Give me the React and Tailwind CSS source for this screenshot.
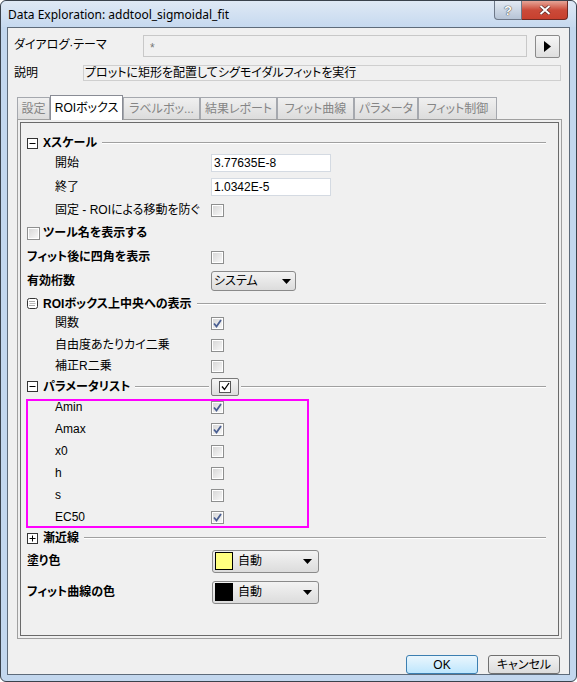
import React from 'react';

const FONT = "[font-family:'Liberation_Sans','Noto_Sans_CJK_JP',sans-serif]";

const CheckMark = ({ color = '#4a5f92', w = 1.8 }) => (
    <svg width="9" height="9" viewBox="0 0 9 9">
        <path d="M1 4.5 L3.5 7.5 L8 1" fill="none" stroke={color} strokeWidth={w} />
    </svg>
);

const Check = ({ checked }) => (
    <span className="inline-flex w-[13px] h-[13px] border border-[#8e8f8f] bg-white p-px shrink-0">
        <span className="flex flex-1 items-center justify-center bg-linear-to-br from-[#d8d8d8] to-[#f7f7f7]">
            {checked && <CheckMark />}
        </span>
    </span>
);

const MinusBox = () => (
    <svg width="11" height="11" viewBox="0 0 11 11" className="shrink-0">
        <rect x="0.5" y="0.5" width="10" height="10" fill="#fff" stroke="#333" />
        <path d="M2.5 5.5 H8.5" stroke="#000" />
    </svg>
);

const PlusBox = () => (
    <svg width="11" height="11" viewBox="0 0 11 11" className="shrink-0">
        <rect x="0.5" y="0.5" width="10" height="10" fill="#fff" stroke="#333" />
        <path d="M2.5 5.5 H8.5 M5.5 2.5 V8.5" stroke="#000" />
    </svg>
);

const GroupBox = () => (
    <svg width="11" height="11" viewBox="0 0 11 11" className="shrink-0">
        <rect x="0.5" y="0.5" width="10" height="10" rx="2" fill="#fff" stroke="#333" />
        <path d="M2.5 3.5 H8.5 M2.5 7.5 H8.5" stroke="#555" strokeDasharray="1 1" />
        <path d="M2.5 5.5 H8.5" stroke="#bbb" />
    </svg>
);

const Arrow = () => (
    <svg width="9" height="5" viewBox="0 0 9 5">
        <path d="M0 0 H9 L4.5 5 Z" fill="#000" />
    </svg>
);

const Header = ({ icon, label, mt, h = 'h-[20px]' }) => (
    <div className={`flex items-center pl-[6px] pr-[12px] ${h} ${mt}`}>
        {icon}
        <span className="ml-[5px] font-bold">{label}</span>
        <div className="flex-1 ml-[5px] border-t border-[#a0a0a0] border-b border-b-white" />
    </div>
);

const SubRow = ({ label, mt, h = 'h-[20px]', children }) => (
    <div className={`flex items-center ${h} ${mt}`}>
        <span className="w-[190px] pl-[34px] shrink-0">{label}</span>
        {children}
    </div>
);

const BoldRow = ({ label, mt, h = 'h-[20px]', children }) => (
    <div className={`flex items-center ${h} ${mt}`}>
        <span className="w-[190px] pl-[6px] shrink-0 font-bold">{label}</span>
        {children}
    </div>
);

const TextBox = ({ value }) => (
    <div className="w-[120px] h-[18px] bg-white border border-[#d4dae2] flex items-center pl-[2px]">{value}</div>
);

const ColorDrop = ({ swatch }) => (
    <div className="ml-px w-[107px] h-[23px] rounded-[3px] border border-[#8a8a8a] bg-linear-to-b from-[#f3f3f3] to-[#dcdcdc] flex items-center pl-[2px] pr-[6px]">
        <span className={`w-[18px] h-[18px] border border-black ${swatch}`} />
        <span className="ml-[5px] flex-1">自動</span>
        <Arrow />
    </div>
);

const tabs = [
    { label: '設定', w: 'w-[33px]' },
    { label: 'ROIボックス', w: 'w-[73px]', active: true },
    { label: 'ラベルボッ...', w: 'w-[77px]' },
    { label: '結果レポート', w: 'w-[77px]' },
    { label: 'フィット曲線', w: 'w-[77px]' },
    { label: 'パラメータ', w: 'w-[64px]' },
    { label: 'フィット制御', w: 'w-[79px]' },
];

const params = [
    { name: 'Amin', on: true },
    { name: 'Amax', on: true },
    { name: 'x0', on: false },
    { name: 'h', on: false },
    { name: 's', on: false },
    { name: 'EC50', on: true },
];

export default function App() {
    return (
        <div className={`w-[577px] h-[682px] bg-[#c3d7ee] border border-[#3a424c] rounded-[6px] flex flex-col text-[12px] text-black [font-feature-settings:'palt'] ${FONT}`}>
            {/* title bar */}
            <div className="h-[28px] flex rounded-t-[6px] bg-linear-to-b from-[#dfe9f5] to-[#c6d9ef]">
                <span className="pl-[7px] pt-[5px] text-[12px] [font-family:'Noto_Sans',sans-serif]">Data Exploration: addtool_sigmoidal_fit</span>
                <div className="ml-auto mr-[8px] flex h-[19px]">
                    <div className="w-[28px] border border-[#6d7888] border-t-0 rounded-bl-[4px] bg-linear-to-b from-[#e3eaf3] to-[#b6c4d6] flex items-center justify-center">
                        <span className="text-white font-bold text-[13px] [text-shadow:0_0_1px_#333,0_0_1px_#333] leading-none">?</span>
                    </div>
                    <div className="w-[46px] border border-[#6e2a24] border-t-0 border-l-0 rounded-br-[4px] bg-linear-to-b from-[#e5a497] via-[#cb4a39] to-[#c7402e] flex items-center justify-center">
                        <svg width="12" height="10" viewBox="0 0 12 10">
                            <path d="M1.5 1 L10.5 9 M10.5 1 L1.5 9" stroke="#4a2220" strokeWidth="3.2" />
                            <path d="M1.5 1 L10.5 9 M10.5 1 L1.5 9" stroke="#fff" strokeWidth="2" />
                        </svg>
                    </div>
                </div>
            </div>

            {/* client */}
            <div className="mx-[6px] mb-[6px] flex-1 border border-[#5e6b7a] bg-[#f0f0f0] flex flex-col">
                <div className="flex mt-[7px]">
                    <span className="w-[135px] pl-[6px] pt-[1px]">ダイアログ·テーマ</span>
                    <div className="w-[384px] h-[22px] border border-[#c8c8c8] bg-[#f0f0f0] pl-[6px] pt-[3px] text-[#777]">*</div>
                    <div className="ml-[8px] w-[25px] h-[23px] border border-[#8a8a8a] rounded-[2px] bg-linear-to-b from-[#f6f6f6] to-[#dedede] flex items-center justify-center">
                        <svg width="7" height="11" viewBox="0 0 7 11"><path d="M0 0 L7 5.5 L0 11 Z" fill="#000" /></svg>
                    </div>
                </div>

                <div className="flex items-center mt-[6px]">
                    <span className="w-[75px] pl-[6px]">説明</span>
                    <div className="w-[478px] h-[16px] border border-[#cfcfcf] flex items-center pl-px">プロットに矩形を配置してシグモイダルフィットを実行</div>
                </div>

                {/* tabs */}
                <div className="flex items-end ml-[9px] mt-[12px] h-[25px]">
                    {tabs.map((t) =>
                        t.active ? (
                            <div key={t.label} className={`${t.w} h-[25px] -mb-px z-10 bg-white border border-[#898c95] border-b-0 flex items-center justify-center`}>
                                {t.label}
                            </div>
                        ) : (
                            <div key={t.label} className={`${t.w} h-[22px] bg-linear-to-b from-[#f0f0f0] to-[#dcdcdc] border border-[#a5a8ae] border-b-0 flex items-center justify-center text-[#858585]`}>
                                {t.label}
                            </div>
                        )
                    )}
                </div>

                {/* tab panel */}
                <div className="ml-[9px] w-[545px] h-[520px] border border-[#a0a0a0] p-[2px]">
                    <div className="h-full border border-[#6a6a6a] flex flex-col">
                        <Header icon={<MinusBox />} label="Xスケール" mt="mt-[10px]" />
                        <SubRow label="開始" mt="mt-0"><TextBox value="3.77635E-8" /></SubRow>
                        <SubRow label="終了" mt="mt-[4px]"><TextBox value="1.0342E-5" /></SubRow>
                        <SubRow label="固定 - ROIによる移動を防ぐ" mt="mt-[3px]"><Check /></SubRow>
                        <div className="flex items-center h-[20px] mt-[3px] pl-[6px]">
                            <Check />
                            <span className="ml-[3px] font-bold">ツール名を表示する</span>
                        </div>
                        <BoldRow label="フィット後に四角を表示" mt="mt-[4px]"><Check /></BoldRow>
                        <BoldRow label="有効桁数" mt="mt-[4px]">
                            <div className="w-[85px] h-[20px] rounded-[3px] border border-[#8a8a8a] bg-linear-to-b from-[#f3f3f3] to-[#dcdcdc] flex items-center pl-[2px] pr-[4px]">
                                <span className="flex-1">システム</span>
                                <Arrow />
                            </div>
                        </BoldRow>
                        <Header icon={<GroupBox />} label="ROIボックス上中央への表示" mt="mt-[3px]" h="h-[19px]" />
                        <SubRow label="関数" mt="mt-0"><Check checked /></SubRow>
                        <SubRow label="自由度あたりカイ二乗" mt="mt-[2px]"><Check /></SubRow>
                        <SubRow label="補正R二乗" mt="mt-[1px]"><Check /></SubRow>
                        <div className="flex items-center h-[19px] mt-[1px] pl-[6px] pr-[12px]">
                            <MinusBox />
                            <span className="ml-[5px] font-bold">パラメータリスト</span>
                            <div className="flex-1 ml-[5px] border-t border-[#a0a0a0] border-b border-b-white" />
                            <div className="mx-[2px] w-[28px] h-[18px] rounded-[2px] border border-[#7a7a7a] bg-linear-to-b from-[#f6f6f6] to-[#dcdcdc] flex items-center justify-center">
                                <span className="w-[12px] h-[12px] border border-[#555] bg-white flex items-center justify-center">
                                    <CheckMark color="#000" w={1.3} />
                                </span>
                            </div>
                            <div className="w-[305px] border-t border-[#a0a0a0] border-b border-b-white" />
                        </div>
                        <div className="relative">
                            {params.map((p) => (
                                <SubRow key={p.name} label={p.name} mt="mt-0" h="h-[22px]">
                                    <Check checked={p.on} />
                                </SubRow>
                            ))}
                            {/* highlight annotation */}
                            <div className="absolute left-[5px] top-[3px] w-[283px] h-[129px] border-2 border-[#ff00ff] pointer-events-none" />
                        </div>
                        <Header icon={<PlusBox />} label="漸近線" mt="mt-0" />
                        <BoldRow label="塗り色" mt="mt-px" h="h-[24px]"><ColorDrop swatch="bg-[#ffff80]" /></BoldRow>
                        <BoldRow label="フィット曲線の色" mt="mt-[7px]" h="h-[24px]"><ColorDrop swatch="bg-black" /></BoldRow>
                    </div>
                </div>

                {/* dialog buttons */}
                <div className="flex justify-end gap-[10px] pr-[9px] mt-[16px]">
                    <button className="w-[72px] h-[19px] rounded-[3px] border border-[#3c7fb1] bg-linear-to-b from-[#eaf6fd] to-[#bee6fd] flex items-center justify-center">OK</button>
                    <button className="w-[72px] h-[19px] rounded-[3px] border border-[#707070] bg-linear-to-b from-[#f2f2f2] to-[#dcdcdc] flex items-center justify-center">キャンセル</button>
                </div>
            </div>
        </div>
    );
}
